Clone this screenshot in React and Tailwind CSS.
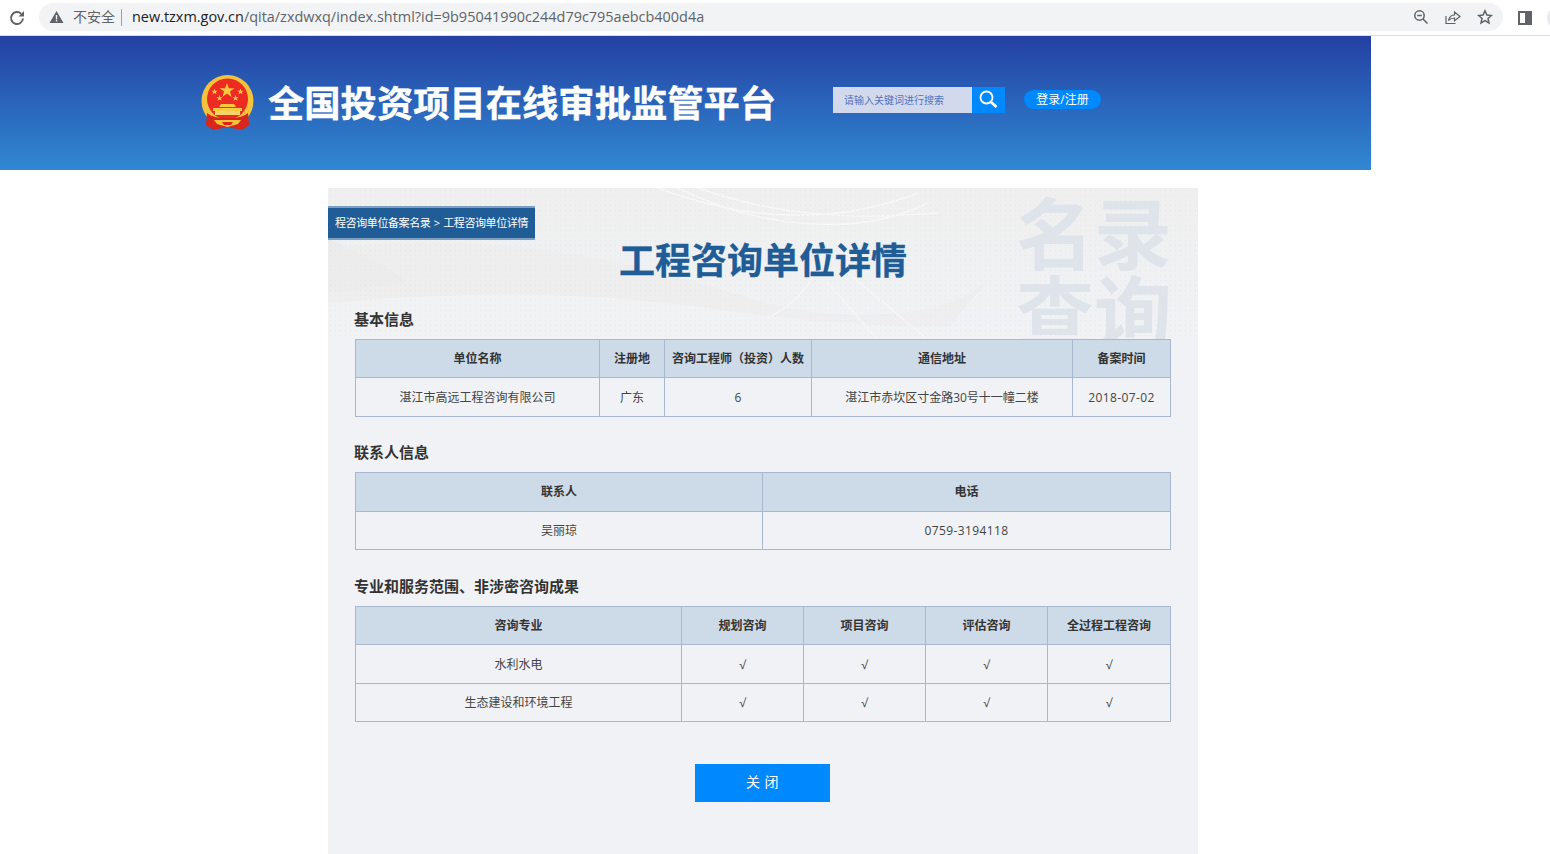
import React from 'react'

const FONT = { fontFamily: '"Open Sans", "Noto Sans CJK SC", sans-serif' }

// Small helpers for the three data tables
function Th({ children }) {
  return <th className="border border-[#a9b8ce] bg-[#cddbe9] text-center align-middle text-xs font-bold text-[#333]">{children}</th>
}

function Td({ children }) {
  return <td className="border border-[#a9b8ce] pt-px text-center align-middle text-xs font-normal text-[#444]">{children}</td>
}

function Latin({ children }) {
  return <span className="tracking-[0.4px]">{children}</span>
}

function Heading({ children, className = '' }) {
  return <h3 className={`-ml-px mb-[10px] h-5 text-[15px] font-bold leading-5 text-[#333] ${className}`}>{children}</h3>
}

function DataTable({ widths, head, rows, headHeight, rowHeights }) {
  return (
    <table className="w-[815px] table-fixed border-collapse">
      <colgroup>
        {widths.map((w, i) => <col key={i} style={{ width: w }} />)}
      </colgroup>
      <thead>
        <tr className={headHeight}>
          {head.map(h => <Th key={h}>{h}</Th>)}
        </tr>
      </thead>
      <tbody>
        {rows.map((r, i) => (
          <tr key={i} className={rowHeights[i]}>
            {r.map((c, j) => <Td key={j}>{c}</Td>)}
          </tr>
        ))}
      </tbody>
    </table>
  )
}

// Browser toolbar on top of the page
function BrowserBar() {
  return (
    <div className="flex h-9 items-center border-b border-[#dadce0] bg-white">
      <svg className="ml-[9px] h-4 w-4 shrink-0 text-[#5f6368]" viewBox="0 0 16 16" fill="none" stroke="currentColor" strokeWidth="2">
        <path d="M14 8.500a6 6 0 1 1-1.800-4.800" />
        <path d="M15 1v5.500H9.500z" fill="currentColor" stroke="none" />
      </svg>
      <div className="-mt-px ml-[14px] flex h-7 w-[1464px] shrink-0 items-center rounded-full bg-[#f1f3f4] pl-[10px]">
        <svg className="h-[14px] w-[15px]" viewBox="0 0 15 14">
          <path d="M7.500 1 14.500 13H.5z" fill="#5f6368" />
          <rect x="6.800" y="5" width="1.400" height="4.400" fill="#f1f3f4" />
          <rect x="6.800" y="10" width="1.400" height="1.400" fill="#f1f3f4" />
        </svg>
        <span className="ml-[9px] text-sm text-[#5f6368]">不安全</span>
        <span className="ml-[6px] h-[17px] w-px bg-[#9aa0a6]" />
        <span className="ml-[10px] text-[14.45px] text-[#202124]">new.tzxm.gov.cn<span className="text-[#5f6368]">/qita/zxdwxq/index.shtml?id=9b95041990c244d79c795aebcb400d4a</span></span>
        <svg className="ml-auto h-4 w-4 text-[#5f6368]" viewBox="0 0 16 16" fill="none" stroke="currentColor" strokeWidth="1.500">
          <circle cx="6.500" cy="6.500" r="4.700" />
          <path d="M10 10l4.500 4.500M4.200 6.500h4.600" />
        </svg>
        <svg className="ml-4 h-4 w-4 text-[#5f6368]" viewBox="0 0 16 16" fill="none" stroke="currentColor" strokeWidth="1.200">
          <path d="M1 7v7.500h9.500" />
          <path d="M3.500 11.500C4.300 8 6.500 6 9.500 6V3l5.500 4.500-5.500 4.200V9C7 9 5 9.700 3.500 11.500z" />
        </svg>
        <svg className="ml-4 h-4 w-4 text-[#5f6368]" viewBox="0 0 16 16" fill="none" stroke="currentColor" strokeWidth="1.500">
          <path d="M8 1.800l1.900 4.200 4.500.5-3.400 3 1 4.500L8 11.700l-4 2.300 1-4.500-3.400-3 4.500-.5z" />
        </svg>
        <span className="w-[10px]" />
      </div>
      <div className="ml-[15px] flex h-[14px] w-[14px] shrink-0 border-2 border-[#5f6368]">
        <span className="flex-1 bg-white" />
        <span className="w-[5px] bg-[#5f6368]" />
      </div>
      <span className="ml-[15px] h-[26px] w-[26px] shrink-0 rounded-full bg-[#e8eaed]" />
    </div>
  )
}

// National emblem, simplified
function Emblem() {
  return (
    <svg className="h-[57px] w-[53px] shrink-0" viewBox="0 0 53 57">
      <circle cx="26.500" cy="26" r="26" fill="#f5c33b" />
      <circle cx="26.500" cy="24" r="20.500" fill="#ec2b22" />
      <path d="M26 8l1.800 5.300h5.600l-4.500 3.300 1.700 5.300-4.600-3.300-4.600 3.300 1.700-5.300-4.500-3.300h5.600z" fill="#f8c93f" />
      <g fill="#f8c93f">
        <path d="M13.500 13.500l.9 2.200h2.300l-1.900 1.400.7 2.200-2-1.300-2 1.300.7-2.200-1.900-1.400h2.300z" />
        <path d="M39.500 13.500l.9 2.200h2.300l-1.900 1.400.7 2.200-2-1.300-2 1.300.7-2.200-1.900-1.400h2.300z" />
        <path d="M18.500 20l.9 2.200h2.300l-1.900 1.400.7 2.200-2-1.300-2 1.300.7-2.200-1.900-1.400h2.300z" />
        <path d="M34.500 20l.9 2.200h2.300l-1.900 1.400.7 2.200-2-1.300-2 1.300.7-2.200-1.900-1.400h2.300z" />
        <path d="M20 29h13l2 3h-17z" />
        <rect x="12" y="33" width="29" height="3" />
        <rect x="14" y="36" width="25" height="4" fill="#f5d36a" />
      </g>
      <path d="M6 38c5 4 10 5 20.500 5S42 42 47 38l1 12-7 5-14.500-3L12 55l-7-5z" fill="#d8261c" />
      <path d="M13 45h27l-3 4-10.500 3L16 49z" fill="#f5c33b" />
      <path d="M21 47h11l-2 3h-7z" fill="#d8261c" />
    </svg>
  )
}

function SiteHeader() {
  return (
    <div className="flex h-[134px] w-[1371px] items-center bg-linear-to-b from-[#2540a3] to-[#3188d2] pl-[201px]">
      <Emblem />
      <h1 className="ml-[14px] w-[508px] whitespace-nowrap text-[36.3px] font-bold text-white [-webkit-text-stroke:0.4px_white]">全国投资项目在线审批监管平台</h1>
      <div className="ml-[57px] -mt-[7px] flex h-[26px] w-[172px]">
        <div className="flex w-[139px] items-center bg-[#d3d9ec] pl-[11px] pt-px text-[10px] text-[#4f74bc]">请输入关键词进行搜索</div>
        <button className="flex w-[33px] items-center justify-center bg-[#0088ff]">
          <svg className="h-[19px] w-[19px]" viewBox="0 0 19 19" fill="none" stroke="white">
            <circle cx="7.500" cy="7.500" r="6" strokeWidth="1.800" />
            <path d="M12 12l5.500 5" strokeWidth="2.800" />
          </svg>
        </button>
      </div>
      <div className="ml-[19px] -mt-[7px] flex h-[19px] w-[77px] items-center justify-center rounded-full bg-[#0088ff] pt-px text-xs text-white">登录/注册</div>
    </div>
  )
}

// Decoration in the top part of the panel: dots, soft folds and the 名录查询 watermark
function PanelBackdrop() {
  return (
    <div className="absolute inset-x-0 top-0 h-[152px] overflow-hidden bg-linear-to-b from-[#efefef] to-[#f0f2f5]">
      <svg className="absolute inset-0 h-full w-full" viewBox="0 0 870 152" preserveAspectRatio="none">
        <path d="M0 50l60 30 20 15-80 10z" fill="#e8e8e9" opacity=".7" />
        <path d="M0 60c150-20 300 10 420 50 100 30 220 20 250-30l-60 72H0z" fill="#ececed" opacity=".6" />
        <path d="M0 115c120-10 240-15 400 8 150 20 260 22 470 0v29H0z" fill="#f1f2f4" />
        <path d="M330 0c80 30 170 40 260 5M350 0c80 40 180 50 250 15M370 0c80 28 150 32 240 25" fill="none" stroke="#f7f7f7" strokeWidth="1.500" />
        <path d="M500 95l50 57M520 85l80 67M440 130c30-15 50-40 55-70" fill="none" stroke="#f6f6f7" strokeWidth="1.500" />
      </svg>
      <div className="absolute left-[688px] top-[7px] w-[160px] text-[78px] font-bold leading-[78px] text-[#dfe4eb]">名录查询</div>
      <div className="absolute inset-0 bg-[radial-gradient(#dfe1e4_0.6px,transparent_1px)] bg-[size:5px_5px] opacity-60" />
    </div>
  )
}

export default function App() {
  const tick = '√'
  return (
    <div className="h-[854px] overflow-hidden bg-white" style={FONT}>
      <BrowserBar />
      <SiteHeader />
      <div className="relative ml-[328px] mt-[18px] h-[666px] w-[870px] bg-[#f0f2f5]">
        <PanelBackdrop />
        <div className="relative pt-[18px]">
          <div className="flex h-[34px] w-[207px] items-center whitespace-pre border-y-2 border-[#7c9fc2] bg-[#205c96] pl-[7px] text-[11px] tracking-[-0.4px] text-white [word-spacing:1px]">程咨询单位备案名录 &gt; 工程咨询单位详情</div>
          <h2 className="-mt-1 h-[50px] text-center text-4xl font-bold leading-[50px] text-[#205c96] [-webkit-text-stroke:0.3px_#205c96]">工程咨询单位详情</h2>

          <div className="ml-[27px] w-[816px]">
            <Heading className="mt-[23px]">基本信息</Heading>
            <DataTable
              widths={[244, 65, 147, 261, 98]}
              head={['单位名称', '注册地', '咨询工程师（投资）人数', '通信地址', '备案时间']}
              rows={[['湛江市高远工程咨询有限公司', '广东', '6', '湛江市赤坎区寸金路30号十一幢二楼', <Latin>2018-07-02</Latin>]]}
              headHeight="h-[38px]"
              rowHeights={['h-[39px]']}
            />

            <Heading className="mt-[25px]">联系人信息</Heading>
            <DataTable
              widths={[407, 408]}
              head={['联系人', '电话']}
              rows={[['吴丽琼', <Latin>0759-3194118</Latin>]]}
              headHeight="h-[39px]"
              rowHeights={['h-[38px]']}
            />

            <Heading className="mt-[26px]">专业和服务范围、非涉密咨询成果</Heading>
            <DataTable
              widths={[326, 122, 122, 122, 123]}
              head={['咨询专业', '规划咨询', '项目咨询', '评估咨询', '全过程工程咨询']}
              rows={[
                ['水利水电', tick, tick, tick, tick],
                ['生态建设和环境工程', tick, tick, tick, tick],
              ]}
              headHeight="h-[38px]"
              rowHeights={['h-[39px]', 'h-[38px]']}
            />
          </div>

          <button className="ml-[367px] mt-[42px] h-[38px] w-[135px] bg-[#0088ff] pb-[2px] text-sm tracking-[0.5px] text-white">关 闭</button>
        </div>
      </div>
    </div>
  )
}
